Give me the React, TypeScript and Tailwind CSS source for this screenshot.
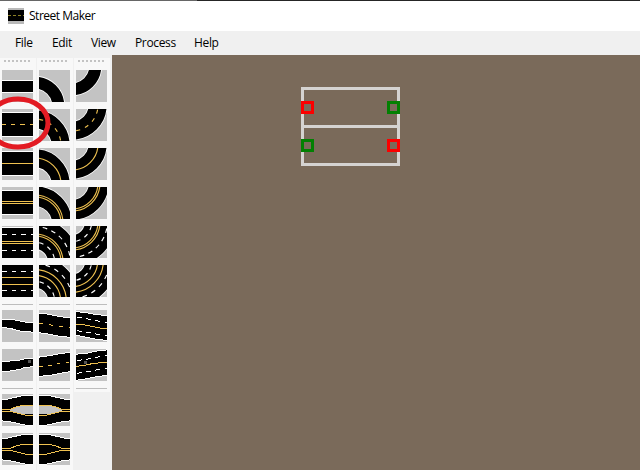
import type { ReactNode } from 'react';

// Tile drawings use three units per screen pixel.
const YELLOW = '#efc150';

function Tile({ children }: { children: ReactNode }) {
  return (
    <svg viewBox="0 0 93 96" className="block h-8 w-[31px] shrink-0 bg-[#c3c3c3]" shapeRendering="crispEdges">
      {children}
    </svg>
  );
}

type Line = { at: number; color: string; dash?: string; offset?: number };

function Straight({ top, bottom, lines = [] }: { top: number; bottom: number; lines?: Line[] }) {
  return (
    <Tile>
      <rect x="0" y={top - 3} width="93" height={bottom - top + 6} fill="#fff" />
      <rect x="0" y={top} width="93" height={bottom - top} fill="#000" />
      {lines.map((l) => (
        <path key={l.at} d={`M0 ${l.at}H93`} stroke={l.color} strokeWidth="3" strokeDasharray={l.dash} strokeDashoffset={l.offset} />
      ))}
    </Tile>
  );
}

// Quarter ring around a point just outside the tile's lower left corner.
const arc = (r: number) => `M-12 ${108 - r}A${r} ${r} 0 0 1 ${r - 12} 108V120`;

function Curve({ up, inner, outer, lines = [] }: { up?: boolean; inner: number; outer: number; lines?: Line[] }) {
  const mid = (inner + outer) / 2;
  return (
    <Tile>
      <g shapeRendering="auto" fill="none" transform={up ? 'translate(0 96) scale(1 -1)' : undefined}>
        <path d={arc(mid)} stroke="#fff" strokeWidth={outer - inner + 5} />
        <path d={arc(mid)} stroke="#000" strokeWidth={outer - inner} />
        {lines.map((l) => (
          <path key={l.at} d={arc(l.at)} stroke={l.color} strokeWidth="3.4" strokeDasharray={l.dash} strokeDashoffset={l.offset} />
        ))}
      </g>
    </Tile>
  );
}

function Bend({ top, bottom, children }: { top: string; bottom: string; children?: ReactNode }) {
  return (
    <Tile>
      <polygon points={`${top} ${bottom}`} fill="#000" stroke="#fff" strokeWidth="3" />
      {children}
    </Tile>
  );
}

function Mark({ p, c = YELLOW, dash }: { p: string; c?: string; dash?: string }) {
  return <polyline points={p} fill="none" stroke={c} strokeWidth="3" strokeDasharray={dash} />;
}

const D = '14 15';
const straightDash: Line = { at: 46.5, color: YELLOW, dash: '13 15', offset: 1 };

const dashed: Line[] = [{ at: 78, color: YELLOW, dash: '12 15.5', offset: 14.5 }];
const single: Line[] = [{ at: 78, color: YELLOW }];
const double: Line[] = [{ at: 78, color: YELLOW }, { at: 84, color: YELLOW }];
const fourLane: Line[] = [
  ...double,
  { at: 59, color: '#fff', dash: '13 14', offset: 14 },
  { at: 106, color: '#fff', dash: '14 13.4', offset: 4 },
];
const fiveLane: Line[] = [
  { at: 77, color: YELLOW },
  { at: 94, color: YELLOW },
  { at: 59, color: '#fff', dash: '13 13', offset: 12 },
  { at: 112, color: '#fff', dash: '14 15', offset: 26 },
];

function CurveSet({ up }: { up?: boolean }) {
  return (
    <>
      <Curve up={up} inner={52} outer={88} />
      <Curve up={up} inner={50} outer={104} lines={dashed} />
      <Curve up={up} inner={50} outer={104} lines={single} />
      <Curve up={up} inner={51} outer={110} lines={double} />
      <Curve up={up} inner={39} outer={131} lines={fourLane} />
      <Curve up={up} inner={40} outer={135} lines={fiveLane} />
    </>
  );
}

function Column({ roads, bends, tail }: { roads: ReactNode; bends: ReactNode; tail?: ReactNode }) {
  return (
    <div className={`flex w-9 flex-col bg-[#f8f8f8] pl-0.5 ${tail ? 'h-[412px]' : 'h-[334px]'}`}>
      <div className="flex h-3 shrink-0 items-center gap-0.5 pl-0.5">
        {[0, 1, 2, 3, 4, 5, 6].map((i) => <i key={i} className="mb-[6px] size-0.5 bg-[#c3c3c3]" />)}
      </div>
      <div className="flex flex-col gap-[7px]">{roads}</div>
      <div className="mt-[7px] mb-[5px] h-px w-[31px] shrink-0 bg-[#bdbdbd]" />
      <div className="flex flex-col gap-[7px]">{bends}</div>
      <div className="mt-[7px] mb-[5px] h-px w-[31px] shrink-0 bg-[#bdbdbd]" />
      {tail && <div className="flex flex-col gap-[7px]">{tail}</div>}
    </div>
  );
}

function Split({ right, filled }: { right?: boolean; filled?: boolean }) {
  return (
    <Tile>
      <g transform={right ? 'translate(93 0) scale(-1 1)' : undefined}>
        <polygon points="-6,18 18,15 48,8 69,3 100,3 100,93 69,93 45,88 24,83 -6,80" fill="#000" stroke="#fff" strokeWidth="3" />
        {filled && <polygon points="24,46 45,38 69,33 93,33 93,61 69,61 45,56 24,50" fill="#c3c3c3" />}
        <Mark p="0,46 24,46 45,38 69,33 93,33" />
        <Mark p="0,52 24,52 45,57 69,63 93,63" />
      </g>
    </Tile>
  );
}

const handles = [
  { key: 'nw', cls: 'left-0 top-[14px] border-[#fb0000]' },
  { key: 'ne', cls: 'right-0 top-[14px] border-[#028002]' },
  { key: 'sw', cls: 'left-0 top-[52px] border-[#028002]' },
  { key: 'se', cls: 'right-0 top-[52px] border-[#fb0000]' },
];

export default function App() {
  return (
    <div className="flex h-[470px] w-[640px] flex-col overflow-hidden bg-[#f0f0f0] font-['Open_Sans','Noto_Sans',sans-serif] text-black">
      <div className="flex h-px shrink-0">
        <div className="w-[197px] bg-[#666]" />
        <div className="flex-1 bg-[#252525]" />
      </div>
      <header className="flex h-[30px] shrink-0 items-center bg-white pl-2">
        <svg viewBox="0 0 16 16" className="size-4" shapeRendering="crispEdges">
          <path d="M0 0H16V16H0Z" fill="#b9b9b9" />
          <path d="M0 2H16V13H0Z" fill="#000" />
          <path d="M0 7.5H16" stroke="#8d8226" strokeDasharray="3 2" />
        </svg>
        <span className="ml-[5px] text-[12px] tracking-[-0.48px]">Street Maker</span>
      </header>
      <nav className="flex h-6 shrink-0 items-center pl-[15px] text-[12px] leading-6 tracking-[-0.35px]">
        <span className="w-[37px]">File</span>
        <span className="w-[39px]">Edit</span>
        <span className="w-11">View</span>
        <span className="w-[59px]">Process</span>
        <span>Help</span>
      </nav>
      <div className="flex h-[415px] shrink-0">
        <aside className="relative flex w-28 shrink-0 gap-px pt-[3px]">
          <Column
            roads={<>
              <Straight top={33} bottom={66} />
              <Straight top={12} bottom={81} lines={[straightDash]} />
              <Straight top={12} bottom={81} lines={[{ at: 46.5, color: YELLOW }]} />
              <Straight top={12} bottom={81} lines={[{ at: 43.5, color: YELLOW }, { at: 49.5, color: YELLOW }]} />
              <Straight top={6} bottom={96} lines={[{ at: 25.5, color: '#fff', dash: D }, { at: 46.5, color: YELLOW }, { at: 52.5, color: YELLOW }, { at: 73.5, color: '#fff', dash: D }]} />
              <Straight top={0} bottom={96} lines={[{ at: 19.5, color: '#fff', dash: D }, { at: 37.5, color: YELLOW }, { at: 58.5, color: YELLOW }, { at: 76.5, color: '#fff', dash: D }]} />
            </>}
            bends={<>
              <Bend top="-6,27 24,27 39,30 69,36 99,38" bottom="99,67 54,63 24,55 -6,52" />
              <Bend top="-6,40 24,36 54,33 72,29 99,27" bottom="99,53 69,55 54,61 24,66 -6,70">
                <rect x="78" y="33" width="8" height="8" fill="#555" />
              </Bend>
            </>}
            tail={<><Split filled /><Split /></>}
          />
          <Column
            roads={<CurveSet />}
            bends={<>
              <Bend top="-6,10 23,12 53,18 99,25" bottom="99,82 68,80 43,75 18,70 -6,68">
                <Mark p="0,40 30,44 60,49 93,53" dash="13 17" />
              </Bend>
              <Bend top="-6,25 33,20 68,13 99,10" bottom="99,67 63,73 33,79 -6,83">
                <Mark p="0,52 30,50 60,44 93,40" dash="11 16" />
              </Bend>
            </>}
            tail={<><Split right filled /><Split right /></>}
          />
          <Column
            roads={<CurveSet up />}
            bends={<>
              <Bend top="-6,5 27,7 52,12 99,18" bottom="99,92 62,88 22,80 -6,75">
                <Mark p="0,43 22,44 42,48 72,54 93,56" />
                <Mark p="3,22 30,26 60,32 93,37" c="#fff" dash="14 14" />
                <Mark p="3,62 30,66 60,72 93,76" c="#fff" dash="14 14" />
              </Bend>
              <Bend top="-6,16 32,13 62,6 99,2" bottom="99,78 62,83 27,90 -6,95">
                <Mark p="0,52 27,49 52,43 93,40" />
                <Mark p="3,35 30,31 60,25 93,20" c="#fff" dash="14 14" />
                <Mark p="3,73 30,69 60,63 93,58" c="#fff" dash="14 14" />
                <rect x="25" y="37" width="8" height="8" fill="#555" />
              </Bend>
            </>}
          />
          <svg className="absolute top-10 left-0 h-14 w-[52px]" viewBox="0 0 52 56">
            <ellipse cx="18" cy="28" rx="30" ry="24" fill="none" stroke="#e31b23" strokeWidth="5" />
          </svg>
        </aside>
        <main className="relative flex-1 bg-[#7a6a5a]">
          <div className="absolute top-8 left-[189px] h-[79px] w-[99px]">
            <div className="flex h-full flex-col border-[3px] border-[#d5d3d1]">
              <div className="h-[35px]" />
              <div className="h-[3px] bg-[#d5d3d1]" />
            </div>
            {handles.map((h) => <div key={h.key} className={`absolute size-[13px] border-[3px] bg-[#7a6a5a] ${h.cls}`} />)}
          </div>
        </main>
      </div>
    </div>
  );
}
